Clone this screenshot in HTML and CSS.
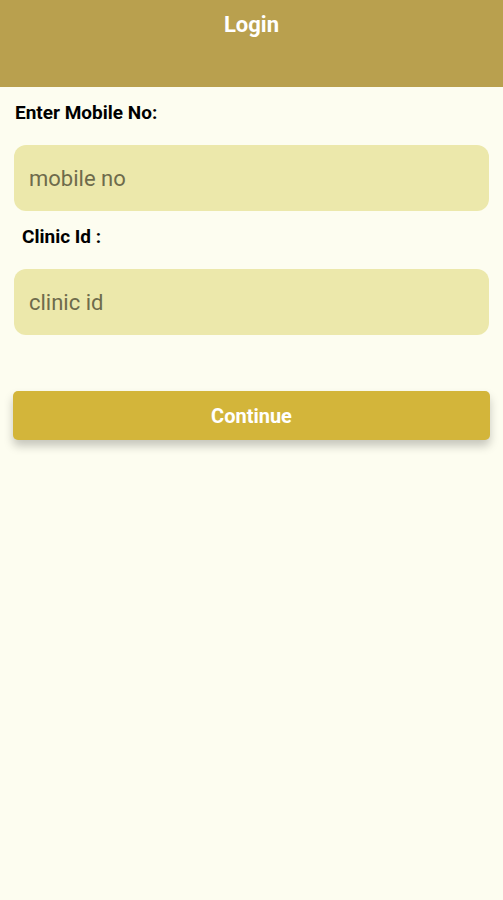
FILE: index.html
```html
<!DOCTYPE html>
<html lang="en">
<head>
  <meta charset="UTF-8" />
  <meta name="viewport" content="width=device-width, initial-scale=1.0"/>
  <title>Login</title>
  <link rel="stylesheet" href="styles.css">
</head>
<body>
  <header class="topbar">
    <h1>Login</h1>
  </header>

  <main class="form">
    <label class="label" for="mobile">Enter Mobile No:</label>
    <input class="field" type="tel" id="mobile" placeholder="mobile no">

    <label class="label label-clinic" for="clinic">Clinic Id :</label>
    <input class="field" type="text" id="clinic" placeholder="clinic id">

    <button class="btn">Continue</button>
  </main>
</body>
</html>
```

FILE: styles.css
```css
html, body {
  min-height: 100%;
}

body {
  margin: 0;
  background-color: #fdfdf0;
  font-family: Roboto, Arial, sans-serif;
  color: #000000;
}

.topbar {
  background-color: #b9a04e;
  height: 87px;
  box-sizing: border-box;
  padding-top: 11px;
  text-align: center;
}

.topbar h1 {
  margin: 0;
  color: #ffffff;
  font-size: 22px;
  font-weight: bold;
  line-height: 28px;
}

.form {
  display: flex;
  flex-direction: column;
  padding: 0 14px 40px;
}

.label {
  font-size: 19px;
  font-weight: bold;
  line-height: 24px;
  margin: 14px 0 0 1px;
}

.label-clinic {
  margin: 14px 0 0 8px;
}

.field {
  margin-top: 20px;
  height: 66px;
  box-sizing: border-box;
  padding: 0 15px;
  border: none;
  border-radius: 12px;
  background-color: #ece8ab;
  font-family: Roboto, Arial, sans-serif;
  font-size: 22px;
  color: #333333;
  outline: none;
}

.field::placeholder {
  color: #6e6b4c;
}

.btn {
  margin: 56px -1px 0 -1px;
  height: 49px;
  border: none;
  border-radius: 5px;
  background-color: #d3b53a;
  color: #ffffff;
  font-family: Roboto, Arial, sans-serif;
  font-size: 20px;
  font-weight: bold;
  box-shadow: 0 6px 10px rgba(0, 0, 0, 0.22);
  cursor: pointer;
}
```
